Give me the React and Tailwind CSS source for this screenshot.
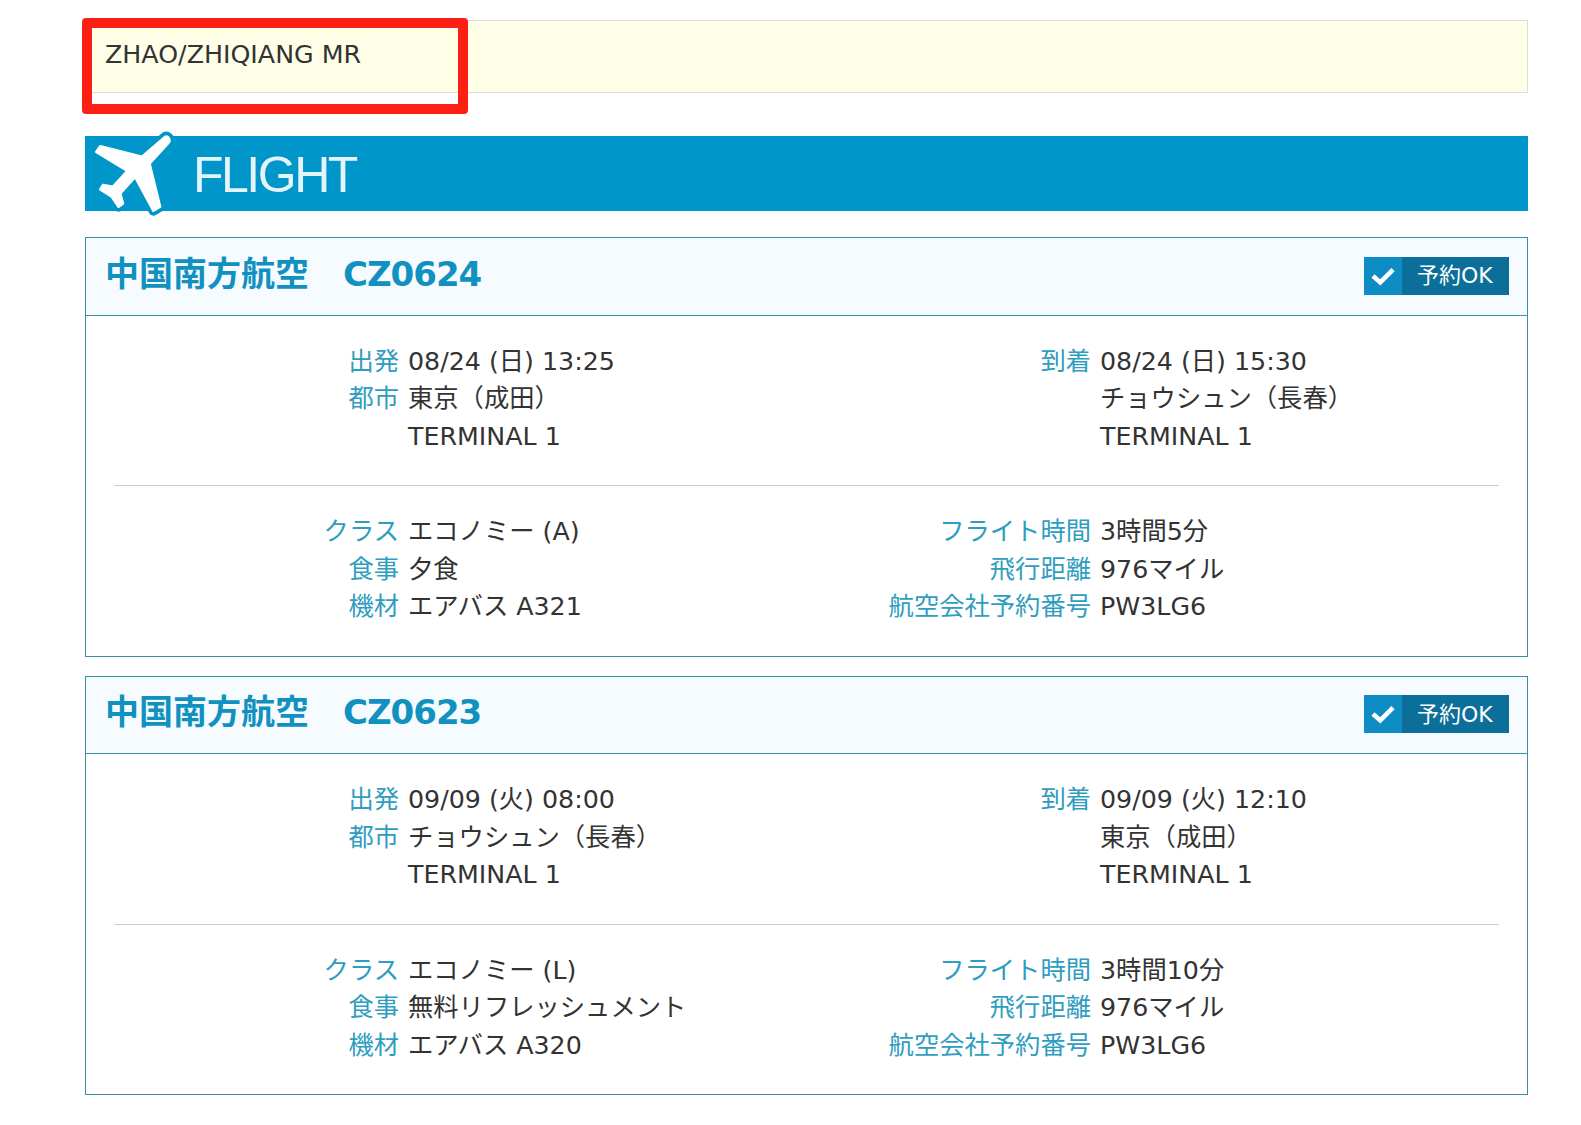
const flights = [
  {
    airline: "中国南方航空",
    code: "CZ0624",
    left: [
      ["出発", "08/24 (日) 13:25"],
      ["都市", "東京（成田）"],
      ["", "TERMINAL 1"],
    ],
    right: [
      ["到着", "08/24 (日) 15:30"],
      ["", "チョウシュン（長春）"],
      ["", "TERMINAL 1"],
    ],
    left2: [
      ["クラス", "エコノミー (A)"],
      ["食事", "夕食"],
      ["機材", "エアバス A321"],
    ],
    right2: [
      ["フライト時間", "3時間5分"],
      ["飛行距離", "976マイル"],
      ["航空会社予約番号", "PW3LG6"],
    ],
  },
  {
    airline: "中国南方航空",
    code: "CZ0623",
    left: [
      ["出発", "09/09 (火) 08:00"],
      ["都市", "チョウシュン（長春）"],
      ["", "TERMINAL 1"],
    ],
    right: [
      ["到着", "09/09 (火) 12:10"],
      ["", "東京（成田）"],
      ["", "TERMINAL 1"],
    ],
    left2: [
      ["クラス", "エコノミー (L)"],
      ["食事", "無料リフレッシュメント"],
      ["機材", "エアバス A320"],
    ],
    right2: [
      ["フライト時間", "3時間10分"],
      ["飛行距離", "976マイル"],
      ["航空会社予約番号", "PW3LG6"],
    ],
  },
];

const planePath =
  "M285 410 C295 405 302 420 295 428 L238 490 L270 620 L250 632 L195 530 L150 580 L158 610 L145 620 L125 590 L90 568 L98 555 L128 560 L172 512 L78 455 L90 438 L215 470 Z";

const InfoColumn = ({ rows }) => (
  <div className="w-[692px]">
    {rows.map(([label, value], i) => (
      <div key={i} className="flex h-[37.5px] items-center">
        <span className="w-[313px] shrink-0 whitespace-nowrap text-right text-[#2f9dbf]">{label}</span>
        <span className="ml-[9px] whitespace-nowrap text-[#333333]">{value}</span>
      </div>
    ))}
  </div>
);

const FlightCard = ({ flight }) => (
  <div className="border border-[#3a8ea8] bg-white">
    <div className="flex h-[77.5px] items-center justify-between border-b border-[#3a8ea8] bg-[#f5fbfe] pl-[19px] pr-[18px]">
      <h2 className="-mt-[5px] text-[34px] font-bold text-[#1091bf]">
        {flight.airline}　<span className="tracking-[-1px]">{flight.code}</span>
      </h2>
      <div className="-mt-0.5 flex h-[38px] w-[145px] items-center bg-[#0b6f99] text-white">
        <div className="flex h-full w-[38px] items-center justify-center bg-[#0e8cc4]">
          <svg width="24" height="20" viewBox="0 0 26 22" fill="none" stroke="white" strokeWidth="5">
            <path d="M2 11 L10 18 L24 4" />
          </svg>
        </div>
        <span className="ml-[15px] text-[22px] font-normal">予約OK</span>
      </div>
    </div>
    <div className="pt-[27px] pb-[30px]">
      <div className="flex">
        <InfoColumn rows={flight.left} />
        <InfoColumn rows={flight.right} />
      </div>
      <div className="mx-7 mt-[30px] mb-[27px] border-t border-[#cccccc]" />
      <div className="flex">
        <InfoColumn rows={flight.left2} />
        <InfoColumn rows={flight.right2} />
      </div>
    </div>
  </div>
);

export default function App() {
  return (
    <div className="min-h-[1125px] bg-white pt-5 pl-[85px] pr-[53px] text-[25.3px] font-['DejaVu_Sans','Noto_Sans_CJK_JP',sans-serif]">
      <div className="relative h-[73px] border border-[#dddddd] bg-[#ffffe8] pl-[19px] pt-[14.5px] text-[#333333]">
        ZHAO/ZHIQIANG MR
        <div className="absolute -left-[4px] -top-[3px] h-[96px] w-[386px] rounded-[4px] border-[10px] border-[#fb1f14]" />
      </div>

      <div className="relative mt-[43px] flex h-[75px] items-center bg-[#0096c9] pl-[108px]">
        <svg className="absolute left-[5px] -top-[9px] overflow-visible" width="87" height="93" viewBox="60 380 260 280">
          <path d={planePath} fill="#0096c9" stroke="#0096c9" strokeWidth="30" strokeLinejoin="round" />
          <path d={planePath} fill="white" stroke="white" strokeWidth="8" strokeLinejoin="round" />
        </svg>
        <span className="mt-1 font-['Liberation_Sans',sans-serif] text-[50px] tracking-[-2.5px] text-[#e4f4fa]">FLIGHT</span>
      </div>

      <div className="mt-[26.4px] flex flex-col gap-[19px]">
        {flights.map((flight) => (
          <FlightCard key={flight.code} flight={flight} />
        ))}
      </div>
    </div>
  );
}
